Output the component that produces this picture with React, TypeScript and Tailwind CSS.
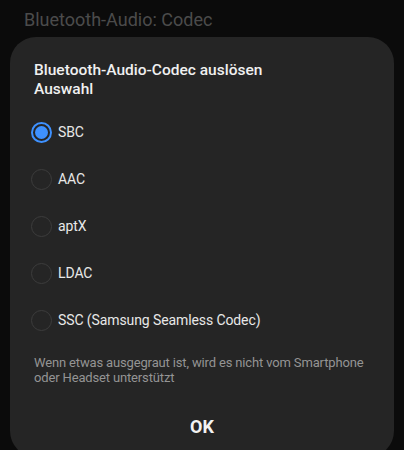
import React from "react";

const options = [
  { label: "SBC", selected: true },
  { label: "AAC", selected: false },
  { label: "aptX", selected: false },
  { label: "LDAC", selected: false },
  { label: "SSC (Samsung Seamless Codec)", selected: false },
];

function Radio({ selected }: { selected: boolean }) {
  if (selected) {
    return (
      <span className="flex h-[21px] w-[21px] items-center justify-center rounded-full border-2 border-[#3e91ff]">
        <span className="h-[13px] w-[13px] rounded-full bg-[#3e91ff]" />
      </span>
    );
  }
  return <span className="h-[21px] w-[21px] rounded-full border-[1.5px] border-[#3c3c3c]" />;
}

export default function App() {
  return (
    <div
      className="h-[450px] w-[404px] overflow-hidden bg-[#0b0b0b]"
      style={{ fontFamily: "Roboto, 'Noto Sans', sans-serif" }}
    >
      <div className="h-[37px] pl-[24px] pt-[10px] text-[18px] leading-[20px] text-[#4b4b4b]">
        Bluetooth-Audio: Codec
      </div>
      <div className="mx-[10px] h-[420px] rounded-[26px] bg-[#252525] pl-[24px] pr-[14px] pt-[24px]">
        <div className="text-[15.5px] font-medium leading-[19px] text-[#f0f0f0]">
          Bluetooth-Audio-Codec auslösen
          <br />
          Auswahl
        </div>
        <div className="-ml-[3px] mt-[10px] flex flex-col">
          {options.map((o) => (
            <div key={o.label} className="flex h-[47px] items-center gap-[6px]">
              <Radio selected={o.selected} />
              <span className="text-[14px] tracking-[-0.1px] text-[#e8e8e8]">{o.label}</span>
            </div>
          ))}
        </div>
        <div className="mt-[11px] whitespace-nowrap text-[13px] leading-[15px] tracking-[-0.15px] text-[#949494]">
          Wenn etwas ausgegraut ist, wird es nicht vom Smartphone
          <br />
          oder Headset unterstützt
        </div>
        <div className="mt-[28px] pr-[10px] text-center text-[18px] font-bold text-[#f2f2f2]">OK</div>
      </div>
    </div>
  );
}
